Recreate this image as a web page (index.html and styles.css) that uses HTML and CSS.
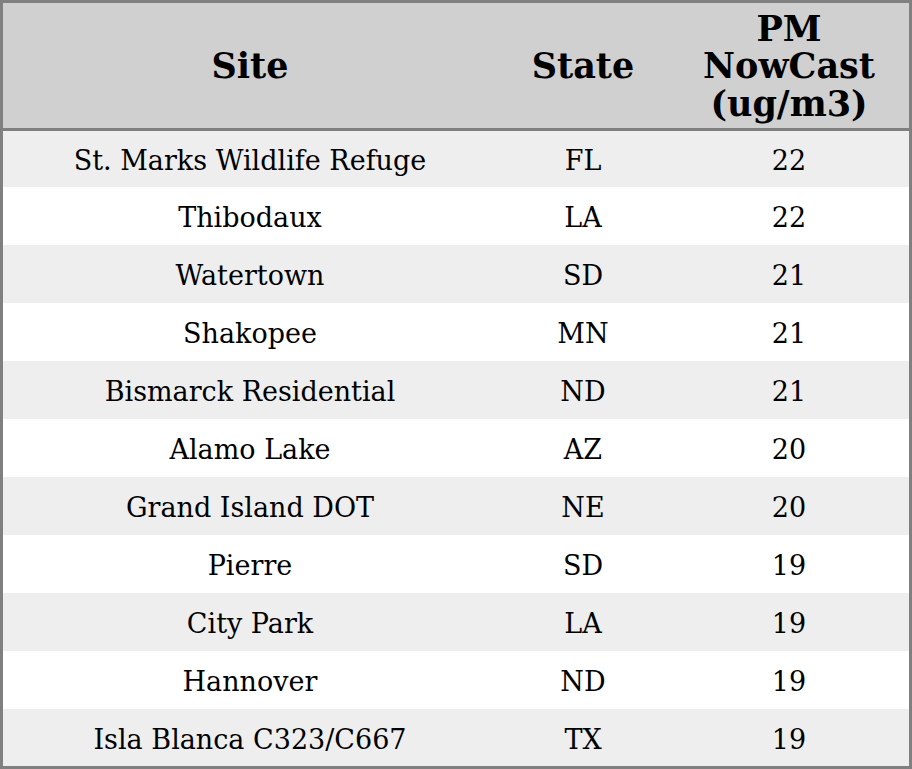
FILE: index.html
```html
<!DOCTYPE html>
<html>
<head>
<meta charset="utf-8">
<link rel="stylesheet" href="styles.css">
</head>
<body>
<div class="table">
  <div class="row head">
    <div class="cell">Site</div>
    <div class="cell">State</div>
    <div class="cell">PM<br>NowCast<br>(ug/m3)</div>
  </div>
  <div class="row odd"><div class="cell">St. Marks Wildlife Refuge</div><div class="cell">FL</div><div class="cell">22</div></div>
  <div class="row"><div class="cell">Thibodaux</div><div class="cell">LA</div><div class="cell">22</div></div>
  <div class="row odd"><div class="cell">Watertown</div><div class="cell">SD</div><div class="cell">21</div></div>
  <div class="row"><div class="cell">Shakopee</div><div class="cell">MN</div><div class="cell">21</div></div>
  <div class="row odd"><div class="cell">Bismarck Residential</div><div class="cell">ND</div><div class="cell">21</div></div>
  <div class="row"><div class="cell">Alamo Lake</div><div class="cell">AZ</div><div class="cell">20</div></div>
  <div class="row odd"><div class="cell">Grand Island DOT</div><div class="cell">NE</div><div class="cell">20</div></div>
  <div class="row"><div class="cell">Pierre</div><div class="cell">SD</div><div class="cell">19</div></div>
  <div class="row odd"><div class="cell">City Park</div><div class="cell">LA</div><div class="cell">19</div></div>
  <div class="row"><div class="cell">Hannover</div><div class="cell">ND</div><div class="cell">19</div></div>
  <div class="row odd last"><div class="cell">Isla Blanca C323/C667</div><div class="cell">TX</div><div class="cell">19</div></div>
</div>
</body>
</html>
```
FILE: styles.css
```css
html, body {
  margin: 0;
  padding: 0;
  background: #ffffff;
}
.table {
  width: 912px;
  height: 769px;
  box-sizing: border-box;
  border: 3px solid #808080;
  font-family: "DejaVu Serif", serif;
  color: #000;
  display: flex;
  flex-direction: column;
}
.row {
  display: grid;
  grid-template-columns: 494px 172px 1fr;
  height: 58px;
  font-size: 27px;
  background: #ffffff;
}
.row .cell {
  padding-top: 3px;
}
.row.odd {
  background: #eeeeee;
}
.row.head {
  height: 125px;
  border-bottom: 3px solid #808080;
  background: #d0d0d0;
  font-weight: bold;
  font-size: 35px;
  line-height: 37.5px;
}
.row.head .cell {
  padding-top: 1px;
}
.row.head + .row {
  height: 56px;
}
.row.last {
  height: 57px;
}
.cell {
  display: flex;
  align-items: center;
  justify-content: center;
  text-align: center;
}
```
